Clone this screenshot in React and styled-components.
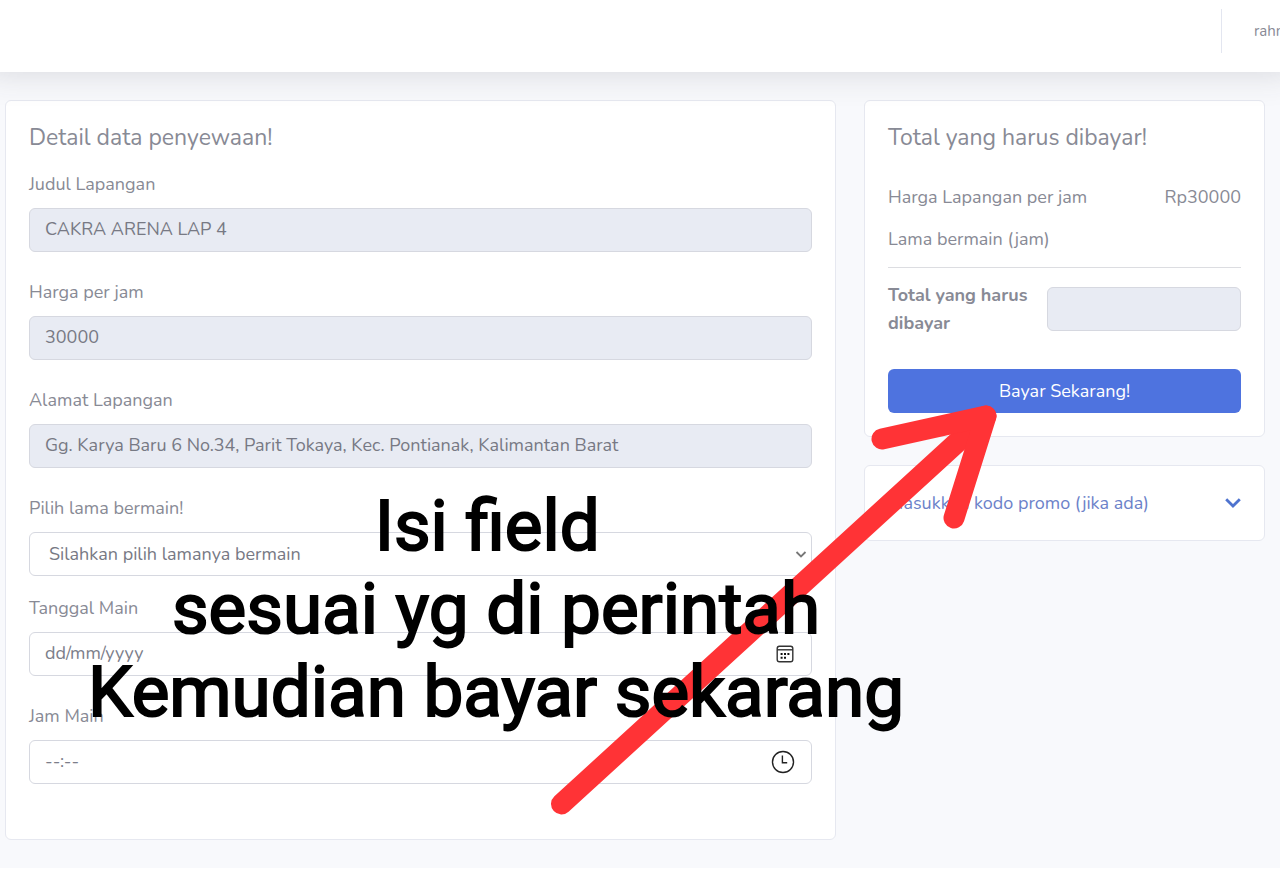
import React from "react";
import styled, { createGlobalStyle } from "styled-components";

const GlobalStyle = createGlobalStyle`
  *, *::before, *::after { box-sizing: border-box; }
  body {
    margin: 0;
    background: #fff;
    color: #888a95;
    font-family: Nunito, "Open Sans", sans-serif;
    font-size: 18px;
    line-height: 28px;
    overflow-x: hidden;
  }
  input, select, button { font: inherit; color: inherit; }
`;

const Page = styled.div`
  position: relative;
  overflow: hidden;
`;

const Topbar = styled.header`
  position: relative;
  z-index: 1;
  display: flex;
  justify-content: flex-end;
  align-items: flex-start;
  height: 72px;
  padding-top: 9px;
  background: #fff;
  box-shadow: 0 -14px 32px 16px rgba(58, 59, 69, 0.16);
`;

const UserLink = styled.a`
  flex: 0 0 59px;
  height: 44px;
  padding-left: 32px;
  border-left: 1px solid #e3e6f0;
  overflow: hidden;
  white-space: nowrap;
  color: #888a95;
  font-size: 15px;
  line-height: 44px;
  text-decoration: none;
`;

const Content = styled.main`
  display: grid;
  grid-template-columns: 831fr 401fr;
  align-items: start;
  gap: 28px;
  padding: 28px 15px 28px 5px;
  background: #f8f9fc;
`;

const Sidebar = styled.aside`
  display: flex;
  flex-direction: column;
  gap: 28px;
`;

const Card = styled.section`
  padding: 23px 23px ${(p) => p.$bottom || 23}px;
  background: #fff;
  border: 1px solid #e6e8f0;
  border-radius: 6px;
`;

const Title = styled.h1`
  margin: 0 0 ${(p) => p.$gap}px;
  font-size: 23px;
  font-weight: 400;
  line-height: 28px;
`;

const Field = styled.div`
  display: flex;
  flex-direction: column;
  gap: 10px;
  margin-bottom: ${(p) => (p.$tight ? 18 : 26)}px;
`;

const ControlBox = styled.div`
  display: grid;
  align-items: center;

  & > * { grid-area: 1 / 1; }
`;

const Input = styled.input`
  width: 100%;
  min-width: 0;
  height: 44px;
  padding: 0 15px 2px;
  background: ${(p) => (p.readOnly ? "#e8ebf3" : "#fff")};
  border: 1px solid #d6d8e0;
  border-radius: 6px;
  color: #777984;
  outline: none;

  &::placeholder { color: #7c7e8a; opacity: 1; }
`;

const Select = styled.select`
  width: 100%;
  height: 44px;
  padding: 0 19px;
  appearance: none;
  background: #fff;
  border: 1px solid #d6d8e0;
  border-radius: 6px;
  color: #777984;
`;

const ControlIcon = styled.svg`
  justify-self: end;
  margin-right: ${(p) => p.$inset}px;
  pointer-events: none;
`;

const PriceRow = styled.div`
  display: flex;
  justify-content: space-between;
  margin-bottom: 14px;
`;

const Divider = styled.hr`
  margin: 0 0 13px;
  border: 0;
  border-top: 1px solid #dcdde1;
`;

const TotalRow = styled.div`
  display: flex;
  align-items: center;
  gap: 16px;
`;

const TotalLabel = styled.label`
  flex: 1;
  font-weight: 700;
`;

const TotalValue = styled.div`
  flex: 0 0 55%;
  display: flex;
`;

const PayButton = styled.button`
  display: block;
  width: 100%;
  height: 44px;
  margin-top: 32px;
  padding: 0;
  background: #4e73df;
  border: 0;
  border-radius: 6px;
  color: #fff;
`;

const PromoButton = styled.button`
  display: flex;
  justify-content: space-between;
  align-items: center;
  height: 76px;
  padding: 0 23px;
  background: #fff;
  border: 1px solid #e6e8f0;
  border-radius: 6px;
  color: #6c82c9;
  text-align: left;
`;

const Arrow = styled.svg`
  position: absolute;
  z-index: 2;
  left: 540px;
  top: 395px;
  pointer-events: none;
`;

const Note = styled.p`
  position: absolute;
  z-index: 3;
  left: 88px;
  top: 484px;
  margin: 0;
  color: #000;
  font-family: Roboto, sans-serif;
  font-size: 71px;
  font-weight: 400;
  line-height: 83px;
  text-align: center;
  white-space: pre;
  -webkit-text-stroke: 2px #000;
  pointer-events: none;
`;

const readOnlyFields = [
  { id: "judul", label: "Judul Lapangan", value: "CAKRA ARENA LAP 4" },
  { id: "harga", label: "Harga per jam", value: "30000" },
  {
    id: "alamat",
    label: "Alamat Lapangan",
    value: "Gg. Karya Baru 6 No.34, Parit Tokaya, Kec. Pontianak, Kalimantan Barat",
  },
];

function CalendarIcon() {
  return (
    <ControlIcon $inset={18} width="18" height="18" viewBox="0 0 18 18" fill="none" stroke="#333" strokeWidth="1.4" aria-hidden="true">
      <rect x="1.2" y="1.2" width="15.6" height="15.6" rx="2.2" />
      <path d="M1.2 4.8h15.6" />
      <path d="M4.6 9h2M8 9h2M11.400 9h2M4.6 12.700h2M8 12.700h2" stroke="#111" strokeWidth="2" />
    </ControlIcon>
  );
}

function ClockIcon() {
  return (
    <ControlIcon $inset={17} width="24" height="24" viewBox="0 0 24 24" fill="none" stroke="#222" strokeWidth="1.4" aria-hidden="true">
      <circle cx="12" cy="12" r="10.5" />
      <path d="M11.400 5.500v7.300h4.800" />
    </ControlIcon>
  );
}

export default function App() {
  return (
    <>
      <GlobalStyle />
      <Page>
        <Topbar>
          <UserLink href="#profil">rahm</UserLink>
        </Topbar>
        <Content>
          <Card $bottom={29}>
            <Title $gap={18}>Detail data penyewaan!</Title>
            {readOnlyFields.map((f) => (
              <Field key={f.id}>
                <label htmlFor={f.id}>{f.label}</label>
                <Input id={f.id} defaultValue={f.value} readOnly />
              </Field>
            ))}
            <Field $tight>
              <label htmlFor="lama">Pilih lama bermain!</label>
              <ControlBox>
                <Select id="lama">
                  <option>Silahkan pilih lamanya bermain</option>
                </Select>
                <ControlIcon $inset={5} width="12" height="12" viewBox="0 0 12 12" fill="none" stroke="#777" strokeWidth="1.8" aria-hidden="true">
                  <path d="M1.5 4 6 8.500l4.500-4.500" />
                </ControlIcon>
              </ControlBox>
            </Field>
            <Field>
              <label htmlFor="tanggal">Tanggal Main</label>
              <ControlBox>
                <Input id="tanggal" placeholder="dd/mm/yyyy" />
                <CalendarIcon />
              </ControlBox>
            </Field>
            <Field>
              <label htmlFor="jam">Jam Main</label>
              <ControlBox>
                <Input id="jam" placeholder="--:--" />
                <ClockIcon />
              </ControlBox>
            </Field>
          </Card>
          <Sidebar>
            <Card>
              <Title as="h2" $gap={31}>Total yang harus dibayar!</Title>
              <PriceRow>
                <span>Harga Lapangan per jam</span>
                <span>Rp30000</span>
              </PriceRow>
              <PriceRow>
                <span>Lama bermain (jam)</span>
              </PriceRow>
              <Divider />
              <TotalRow>
                <TotalLabel htmlFor="total">Total yang harus dibayar</TotalLabel>
                <TotalValue>
                  <Input id="total" readOnly />
                </TotalValue>
              </TotalRow>
              <PayButton type="button">Bayar Sekarang!</PayButton>
            </Card>
            <PromoButton type="button">
              <span>Masukkan kodo promo (jika ada)</span>
              <svg width="16" height="16" viewBox="0 0 16 16" fill="none" stroke="#4e73cf" strokeWidth="2.8" aria-hidden="true">
                <path d="M1.200 4.200 8 11l6.800-6.800" />
              </svg>
            </PromoButton>
          </Sidebar>
        </Content>
        <Arrow width="470" height="430" viewBox="540 395 470 430" fill="none" stroke="#ff3336" strokeWidth="21" strokeLinecap="round" strokeLinejoin="round" aria-hidden="true">
          <path d="M561.500 804 986 416" />
          <path d="M882 439 986 416 954 518" />
        </Arrow>
        <Note>{"Isi field \nsesuai yg di perintah\nKemudian bayar sekarang"}</Note>
      </Page>
    </>
  );
}
